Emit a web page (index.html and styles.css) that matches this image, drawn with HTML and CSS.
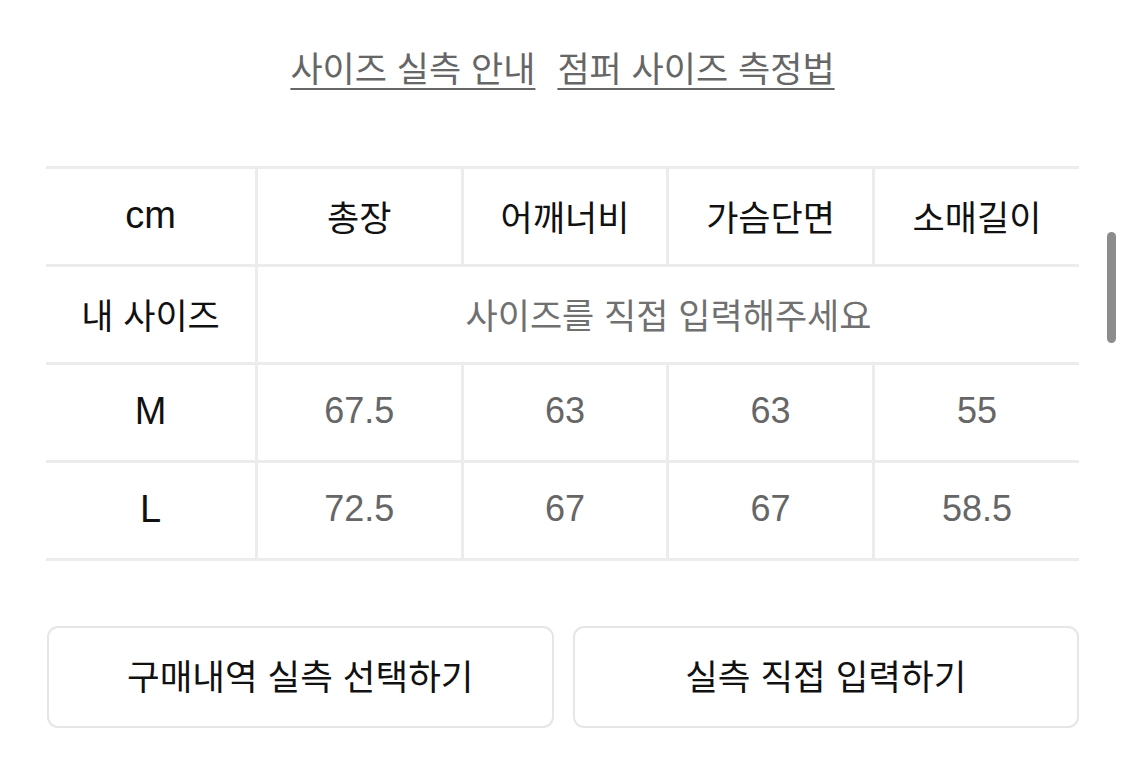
FILE: index.html
```
<!DOCTYPE html>
<html lang="ko">
<head>
<meta charset="utf-8">
<link rel="stylesheet" href="styles.css">
</head>
<body>
<div class="page">
  <div class="links">
    <a class="link" href="#">사이즈 실측 안내</a>
    <a class="link" href="#">점퍼 사이즈 측정법</a>
  </div>
  <table class="size-table">
    <tr>
      <th class="first lat">cm</th>
      <th>총장</th>
      <th>어깨너비</th>
      <th>가슴단면</th>
      <th>소매길이</th>
    </tr>
    <tr>
      <th class="first">내 사이즈</th>
      <td class="hint" colspan="4">사이즈를 직접 입력해주세요</td>
    </tr>
    <tr>
      <th class="first lat">M</th>
      <td>67.5</td>
      <td>63</td>
      <td>63</td>
      <td>55</td>
    </tr>
    <tr>
      <th class="first lat">L</th>
      <td>72.5</td>
      <td>67</td>
      <td>67</td>
      <td>58.5</td>
    </tr>
  </table>
  <div class="buttons">
    <button class="btn">구매내역 실측 선택하기</button>
    <button class="btn">실측 직접 입력하기</button>
  </div>
</div>
<div class="scrollbar"></div>
</body>
</html>
```
FILE: styles.css
```
html, body {
  margin: 0;
  padding: 0;
  background: #ffffff;
}
body {
  width: 1125px;
  height: 775px;
  overflow: hidden;
  position: relative;
  font-family: "Noto Sans CJK KR", "Noto Sans", sans-serif;
}
.page {
  padding: 0 46px;
}
.links {
  display: flex;
  justify-content: center;
  gap: 22px;
  padding-top: 44px;
  height: 166px;
  box-sizing: border-box;
}
.link {
  font-size: 35px;
  line-height: 46px;
  height: 50px;
  color: #666666;
  text-decoration: underline;
  text-decoration-thickness: 2px;
  text-underline-offset: 6px;
}
.size-table {
  width: 1033px;
  border-collapse: collapse;
  table-layout: fixed;
}
.size-table tr {
  height: 98px;
}
.size-table th,
.size-table td {
  padding: 0 0 3px;
  text-align: center;
  vertical-align: middle;
  border: 3px solid #ececec;
}
.size-table tr > :first-child {
  border-left: none;
}
.size-table tr > :last-child {
  border-right: none;
}
.size-table th {
  font-size: 35px;
  font-weight: 400;
  color: #111111;
}
.size-table th.first {
  width: 209px;
}
.size-table th.lat {
  font-family: "Liberation Sans", Arial, sans-serif;
  font-size: 38px;
  font-weight: 400;
}
.size-table td {
  font-family: "Liberation Sans", Arial, sans-serif;
  font-size: 36px;
  color: #666666;
}
.size-table td.hint {
  font-family: "Noto Sans CJK KR", "Noto Sans", sans-serif;
  font-size: 35px;
  color: #707070;
}
.buttons {
  display: flex;
  gap: 19px;
  margin-top: 65px;
  padding-left: 1px;
}
.btn {
  flex: 1;
  height: 102px;
  background: #ffffff;
  border: 2px solid #e6e6e6;
  border-radius: 11px;
  font-family: "Noto Sans CJK KR", "Noto Sans", sans-serif;
  font-size: 35.5px;
  font-weight: 400;
  color: #111111;
  padding: 0 0 6px;
}
.scrollbar {
  position: absolute;
  left: 1107px;
  top: 232px;
  width: 9px;
  height: 111px;
  border-radius: 5px;
  background: #8c8c8c;
}
```
